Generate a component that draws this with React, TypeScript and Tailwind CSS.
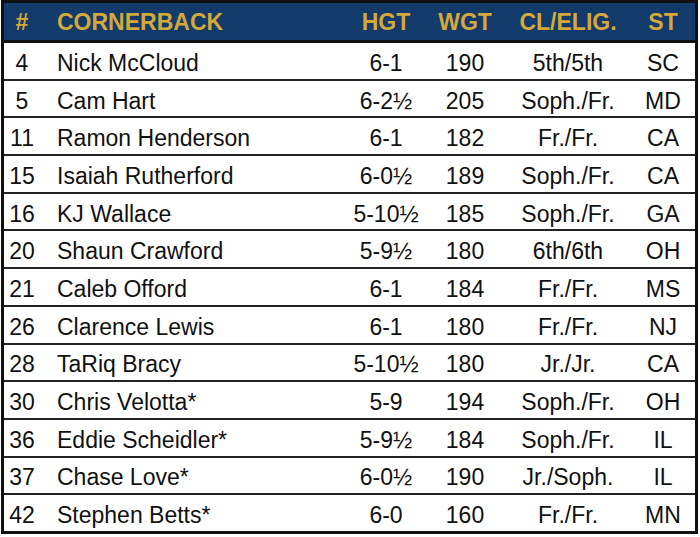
const players = [
  ["4", "Nick McCloud", "6-1", "190", "5th/5th", "SC"],
  ["5", "Cam Hart", "6-2½", "205", "Soph./Fr.", "MD"],
  ["11", "Ramon Henderson", "6-1", "182", "Fr./Fr.", "CA"],
  ["15", "Isaiah Rutherford", "6-0½", "189", "Soph./Fr.", "CA"],
  ["16", "KJ Wallace", "5-10½", "185", "Soph./Fr.", "GA"],
  ["20", "Shaun Crawford", "5-9½", "180", "6th/6th", "OH"],
  ["21", "Caleb Offord", "6-1", "184", "Fr./Fr.", "MS"],
  ["26", "Clarence Lewis", "6-1", "180", "Fr./Fr.", "NJ"],
  ["28", "TaRiq Bracy", "5-10½", "180", "Jr./Jr.", "CA"],
  ["30", "Chris Velotta*", "5-9", "194", "Soph./Fr.", "OH"],
  ["36", "Eddie Scheidler*", "5-9½", "184", "Soph./Fr.", "IL"],
  ["37", "Chase Love*", "6-0½", "190", "Jr./Soph.", "IL"],
  ["42", "Stephen Betts*", "6-0", "160", "Fr./Fr.", "MN"],
];

const cols = "grid grid-cols-[36px_306px_80px_78px_128px_62px] items-center";

export default function App() {
  return (
    <div className="w-[700px] h-[537px] bg-white font-['Liberation_Sans',Arial,sans-serif]">
      <div className="ml-px w-[697px] h-[534px] border-[3px] border-[#111] flex flex-col">
        <div className={`${cols} h-[40px] shrink-0 bg-[#123a6b] border-b-[3px] border-[#111] text-[#d4a93a] font-bold text-[23px] leading-none pt-px`}>
          <span className="text-center">#</span>
          <span className="pl-[17px]">CORNERBACK</span>
          <span className="text-center">HGT</span>
          <span className="text-center">WGT</span>
          <span className="text-center">CL/ELIG.</span>
          <span className="text-center">ST</span>
        </div>
        {players.map((p, i) => (
          <div
            key={p[0]}
            className={`${cols} flex-1 text-[23px] leading-none text-[#111] pt-[5px] ${i > 0 ? "border-t-2 border-[#222]" : ""}`}
          >
            <span className="text-center">{p[0]}</span>
            <span className="pl-[17px]">{p[1]}</span>
            <span className="text-center">{p[2]}</span>
            <span className="text-center">{p[3]}</span>
            <span className="text-center">{p[4]}</span>
            <span className="text-center">{p[5]}</span>
          </div>
        ))}
      </div>
    </div>
  );
}
